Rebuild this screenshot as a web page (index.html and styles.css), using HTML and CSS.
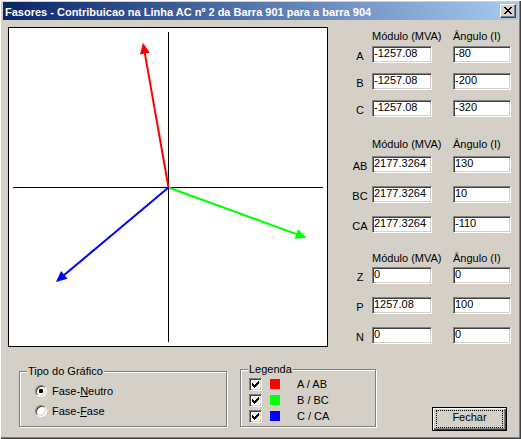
FILE: index.html
```html
<!DOCTYPE html>
<html lang="pt">
<head>
<meta charset="utf-8">
<title>Fasores</title>
<link rel="stylesheet" href="styles.css">
</head>
<body>
<div class="window">
  <div class="titlebar">
    <span class="title">Fasores - Contribuicao na Linha AC nº 2 da Barra 901 para a barra 904</span>
    <span class="close"><svg width="8" height="7" viewBox="0 0 8 7" shape-rendering="crispEdges"><path d="M0 0h2v1H0zM6 0h2v1H6zM1 1h2v1H1zM5 1h2v1H5zM2 2h4v1H2zM3 3h2v1H3zM2 4h4v1H2zM1 5h2v1H1zM5 5h2v1H5zM0 6h2v1H0zM6 6h2v1H6z" fill="#000"/></svg></span>
  </div>
  <div class="main">
    <div class="chart">
      <svg width="318" height="318" viewBox="1 1 318 318">
        <path d="M160.5 5V315M5 160.5H315" stroke="#000" stroke-width="1" fill="none" shape-rendering="crispEdges"/>
        <g transform="translate(160.5 160.5) rotate(-100)">
          <line x1="0" y1="0" x2="137" y2="0" stroke="#ff0000" stroke-width="2"/>
          <polygon points="147,0 136,-5 136,5" fill="#ff0000"/>
        </g>
        <g transform="translate(160.5 160.5) rotate(20)">
          <line x1="0" y1="0" x2="137" y2="0" stroke="#00ff00" stroke-width="2"/>
          <polygon points="147,0 136,-5 136,5" fill="#00ff00"/>
        </g>
        <g transform="translate(160.5 160.5) rotate(140)">
          <line x1="0" y1="0" x2="137" y2="0" stroke="#0000ff" stroke-width="2"/>
          <polygon points="147,0 136,-5 136,5" fill="#0000ff"/>
        </g>
      </svg>
    </div>
    <div class="panel">
      <div class="group g1">
        <div class="head"><span>Módulo (MVA)</span><span>Ângulo (I)</span></div>
        <div class="row"><span class="lbl">A</span><span class="field f1">-1257.08</span><span class="field f2">-80</span></div>
        <div class="row"><span class="lbl">B</span><span class="field f1">-1257.08</span><span class="field f2">-200</span></div>
        <div class="row"><span class="lbl">C</span><span class="field f1">-1257.08</span><span class="field f2">-320</span></div>
      </div>
      <div class="group g2">
        <div class="head"><span>Módulo (MVA)</span><span>Ângulo (I)</span></div>
        <div class="row"><span class="lbl">AB</span><span class="field f1">2177.3264</span><span class="field f2">130</span></div>
        <div class="row"><span class="lbl">BC</span><span class="field f1">2177.3264</span><span class="field f2">10</span></div>
        <div class="row"><span class="lbl">CA</span><span class="field f1">2177.3264</span><span class="field f2">-110</span></div>
      </div>
      <div class="group g3">
        <div class="head"><span>Módulo (MVA)</span><span>Ângulo (I)</span></div>
        <div class="row"><span class="lbl">Z</span><span class="field f1">0</span><span class="field f2">0</span></div>
        <div class="row"><span class="lbl">P</span><span class="field f1">1257.08</span><span class="field f2">100</span></div>
        <div class="row"><span class="lbl">N</span><span class="field f1">0</span><span class="field f2">0</span></div>
      </div>
    </div>
  </div>
  <div class="bottom">
    <fieldset class="grp tipo">
      <legend>Tipo do Gráfico</legend>
      <div class="opts">
        <div class="opt"><span class="radio on"></span><span class="otxt">Fase-<u>N</u>eutro</span></div>
        <div class="opt"><span class="radio"></span><span class="otxt">Fase-<u>F</u>ase</span></div>
      </div>
    </fieldset>
    <fieldset class="grp legenda">
      <legend>Legenda</legend>
      <div class="chk-row"><span class="check"><svg width="7" height="7" viewBox="0 0 7 7" shape-rendering="crispEdges"><path d="M0 2H1V3H2V4H3V3H4V2H5V1H6V0H7V3H6V4H5V5H4V6H3V7H2V6H1V5H0Z" fill="#000"/></svg></span><span class="swatch red"></span><span class="txt">A / AB</span></div>
      <div class="chk-row"><span class="check"><svg width="7" height="7" viewBox="0 0 7 7" shape-rendering="crispEdges"><path d="M0 2H1V3H2V4H3V3H4V2H5V1H6V0H7V3H6V4H5V5H4V6H3V7H2V6H1V5H0Z" fill="#000"/></svg></span><span class="swatch green"></span><span class="txt">B / BC</span></div>
      <div class="chk-row"><span class="check"><svg width="7" height="7" viewBox="0 0 7 7" shape-rendering="crispEdges"><path d="M0 2H1V3H2V4H3V3H4V2H5V1H6V0H7V3H6V4H5V5H4V6H3V7H2V6H1V5H0Z" fill="#000"/></svg></span><span class="swatch blue"></span><span class="txt">C / CA</span></div>
    </fieldset>
    <div class="btn"><span class="btn-face">Fechar</span></div>
  </div>
</div>
</body>
</html>
```
FILE: styles.css
```css
* { box-sizing: border-box; }
html, body { margin: 0; padding: 0; }
body {
  background: #D4D0C8;
  font-family: "Liberation Sans", Arial, sans-serif;
  font-size: 11px;
  line-height: 13px;
  color: #000;
}
.window {
  width: 521px;
  height: 439px;
  padding: 2px 3px 0 3px;
  background: #D4D0C8;
  box-shadow: inset 1px 1px #fff, inset -1px -1px #404040, inset -2px -2px #808080;
  overflow: hidden;
}
.titlebar {
  height: 18px;
  display: flex;
  align-items: flex-start;
  background: linear-gradient(to right, #0A246A, #A6CAF0);
  color: #fff;
}
.title {
  font-weight: bold;
  padding: 4px 0 0 2px;
  white-space: nowrap;
}
.close {
  margin: 2px 2px 0 auto;
  width: 16px;
  height: 14px;
  display: flex;
  align-items: flex-start;
  padding: 2px 0 0 3px;
  background: #D4D0C8;
  border: 1px solid;
  border-color: #fff #404040 #404040 #fff;
  box-shadow: inset -1px -1px #808080;
}
.close svg { display: block; }
.main {
  display: flex;
  align-items: flex-start;
}
.chart {
  width: 320px;
  height: 320px;
  margin: 7px 0 0 5px;
  border: 1px solid #000;
  background: #fff;
}
.chart svg { display: block; }
.panel {
  margin-left: 20px;
  padding-top: 10px;
}
.group {
  display: flex;
  flex-direction: column;
}
.g2 { margin-top: 21px; }
.g3 { margin-top: 19px; }
.head {
  display: flex;
  padding-left: 24px;
  white-space: nowrap;
}
.head span:first-child { width: 81px; }
.g1 .head { margin-bottom: 3px; }
.g2 .head { margin-bottom: 5px; }
.g3 .head { margin-bottom: 2px; }
.row {
  display: flex;
  height: 17px;
}
.g1 .row + .row { margin-top: 10px; }
.g2 .row + .row, .g3 .row + .row { margin-top: 13px; }
.lbl {
  width: 24px;
  text-align: center;
  padding-top: 4px;
}
.field {
  height: 17px;
  background: #fff;
  border: 1px solid;
  border-color: #808080 #fff #fff #808080;
  box-shadow: inset 1px 1px #404040, inset -1px -1px #D4D0C8;
  padding: 0 1px;
  white-space: nowrap;
  overflow: hidden;
}
.f1 { width: 60px; }
.f2 { width: 58px; margin-left: 21px; }

.bottom {
  display: flex;
  align-items: flex-start;
}
.grp {
  margin: 0;
  padding: 0;
  min-width: 0;
  border: 1px solid #808080;
  box-shadow: inset 1px 1px #fff, 1px 1px #fff;
}
.grp legend {
  margin-left: 7px;
  padding: 0 1px;
  line-height: 13px;
  background: #D4D0C8;
}
.tipo {
  width: 208px;
  height: 62px;
  margin: 18px 0 0 16px;
}
.legenda {
  width: 136px;
  height: 64px;
  margin: 16px 0 0 13px;
}
.opts { padding-top: 3px; }
.opt {
  display: flex;
  align-items: center;
  height: 20px;
}
.radio {
  width: 12px;
  height: 12px;
  margin-left: 15px;
  border-radius: 50%;
  border: 1px solid;
  border-color: #808080 #fff #fff #808080;
  background: #fff;
  box-shadow: inset 1px 1px #404040, inset -1px -1px #D4D0C8;
  display: flex;
  align-items: center;
  justify-content: center;
}
.radio.on::after {
  content: "";
  width: 4px;
  height: 4px;
  border-radius: 1px;
  background: #000;
}
.otxt { margin-left: 5px; }
.chk-row {
  display: flex;
  align-items: center;
  height: 16px;
}
.check {
  width: 13px;
  height: 13px;
  margin-left: 8px;
  padding: 2px;
  background: #fff;
  border: 1px solid;
  border-color: #808080 #fff #fff #808080;
  box-shadow: inset 1px 1px #404040, inset -1px -1px #D4D0C8;
}
.check svg { display: block; }
.swatch {
  width: 10px;
  height: 10px;
  margin-left: 8px;
}
.red { background: #ff0000; }
.green { background: #00ff00; }
.blue { background: #0000ff; }
.txt { margin-left: 17px; }
.btn {
  width: 75px;
  height: 24px;
  margin: 60px 0 0 56px;
  padding: 2px 3px;
  display: flex;
  border: 1px solid #000;
  background: #D4D0C8;
  box-shadow: inset 1px 1px #fff, inset -1px -1px #404040, inset -2px -2px #808080;
}
.btn-face {
  flex: 1;
  display: flex;
  align-items: center;
  justify-content: center;
  border: 1px dotted #000;
  padding-bottom: 3px;
}
```
